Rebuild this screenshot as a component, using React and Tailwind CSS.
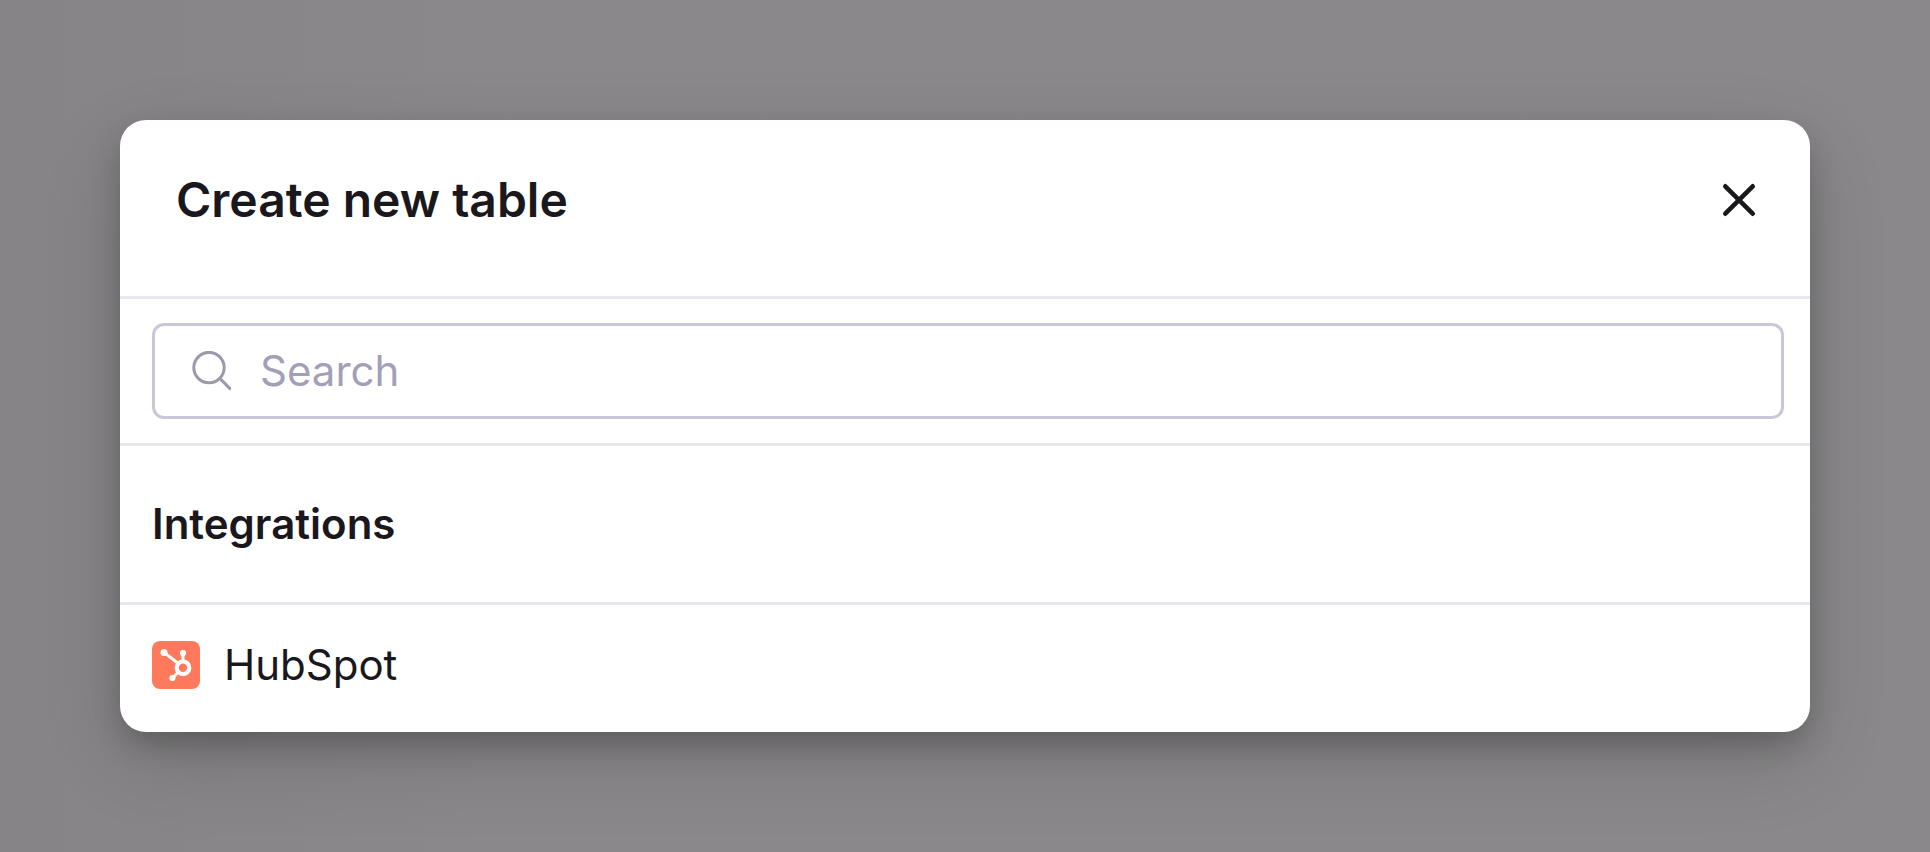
import { useState } from 'react';

const integrations = [{ id: 'hubspot', name: 'HubSpot', icon: HubSpotIcon }];

function CloseIcon() {
  return (
    <svg viewBox="0 0 56 56" className="size-14" fill="none" stroke="currentColor" strokeWidth="4.6" strokeLinecap="round" aria-hidden="true">
      <path d="M14.3 14.3 41.7 41.7M41.7 14.3 14.3 41.7" />
    </svg>
  );
}

function SearchIcon() {
  return (
    <svg viewBox="0 0 40 40" className="size-10 shrink-0" fill="none" stroke="currentColor" strokeWidth="3" strokeLinecap="round" aria-hidden="true">
      <circle cx="18" cy="16.6" r="15.2" />
      <path d="M28.8 27.4 39 37.6" />
    </svg>
  );
}

function HubSpotIcon() {
  return (
    <svg viewBox="0 0 48 48" className="size-12 shrink-0" aria-hidden="true">
      <rect width="48" height="48" rx="8" fill="#ff7a5c" />
      <g fill="none" stroke="#fff">
        <circle cx="31" cy="26.8" r="6.3" strokeWidth="4.2" />
        <path d="M12 11.4 26 22.2M31 12v9M20.4 37l6-6" strokeWidth="3" />
      </g>
      <g fill="#fff">
        <circle cx="12" cy="11.4" r="3.5" />
        <circle cx="31" cy="12" r="3.1" />
        <circle cx="20.4" cy="37" r="3.1" />
      </g>
    </svg>
  );
}

export default function App() {
  const [open, setOpen] = useState(true);
  const [query, setQuery] = useState('');

  const results = integrations.filter((item) => item.name.toLowerCase().includes(query.trim().toLowerCase()));

  return (
    <div className="min-h-screen bg-linear-to-r from-[#868486] to-[#8a888a] to-25% p-[120px] font-['Inter',sans-serif] text-[#1a181d]">
      {open && (
        <div
          role="dialog"
          aria-labelledby="dialog-title"
          className="overflow-hidden rounded-[26px] bg-white shadow-[0_14px_32px_-4px_rgba(0,0,0,0.24),0_28px_84px_-4px_rgba(0,0,0,0.16)]"
        >
          <header className="flex items-center justify-between border-b-3 border-[#e8e7ee] pt-12 pr-[43px] pb-16 pl-14">
            <h1 id="dialog-title" className="text-[48px] leading-16 font-semibold">
              Create new table
            </h1>
            <button type="button" aria-label="Close" className="cursor-pointer" onClick={() => setOpen(false)}>
              <CloseIcon />
            </button>
          </header>

          <div className="border-b-3 border-[#e8e7ee] py-6 pr-[26px] pl-8">
            <div className="flex h-24 items-center gap-[29px] rounded-[12px] border-3 border-[#cbc7d8] px-9 text-[#9c99ab]">
              <SearchIcon />
              <input
                type="text"
                aria-label="Search"
                placeholder="Search"
                value={query}
                onChange={(e) => setQuery(e.target.value)}
                className="min-w-0 flex-1 text-[42px] leading-14 text-[#1a181d] outline-none placeholder:text-[#a39fb8]"
              />
            </div>
          </div>

          <h2 className="border-b-3 border-[#e8e7ee] px-8 py-[50px] text-[42px] leading-14 font-semibold">Integrations</h2>

          <ul>
            {results.map(({ id, name, icon: Icon }) => (
              <li key={id}>
                <button type="button" className="flex w-full cursor-pointer items-center gap-6 px-8 pt-8 pb-[39px] text-left text-[42px] leading-14">
                  <Icon />
                  {name}
                </button>
              </li>
            ))}
          </ul>
        </div>
      )}
    </div>
  );
}
